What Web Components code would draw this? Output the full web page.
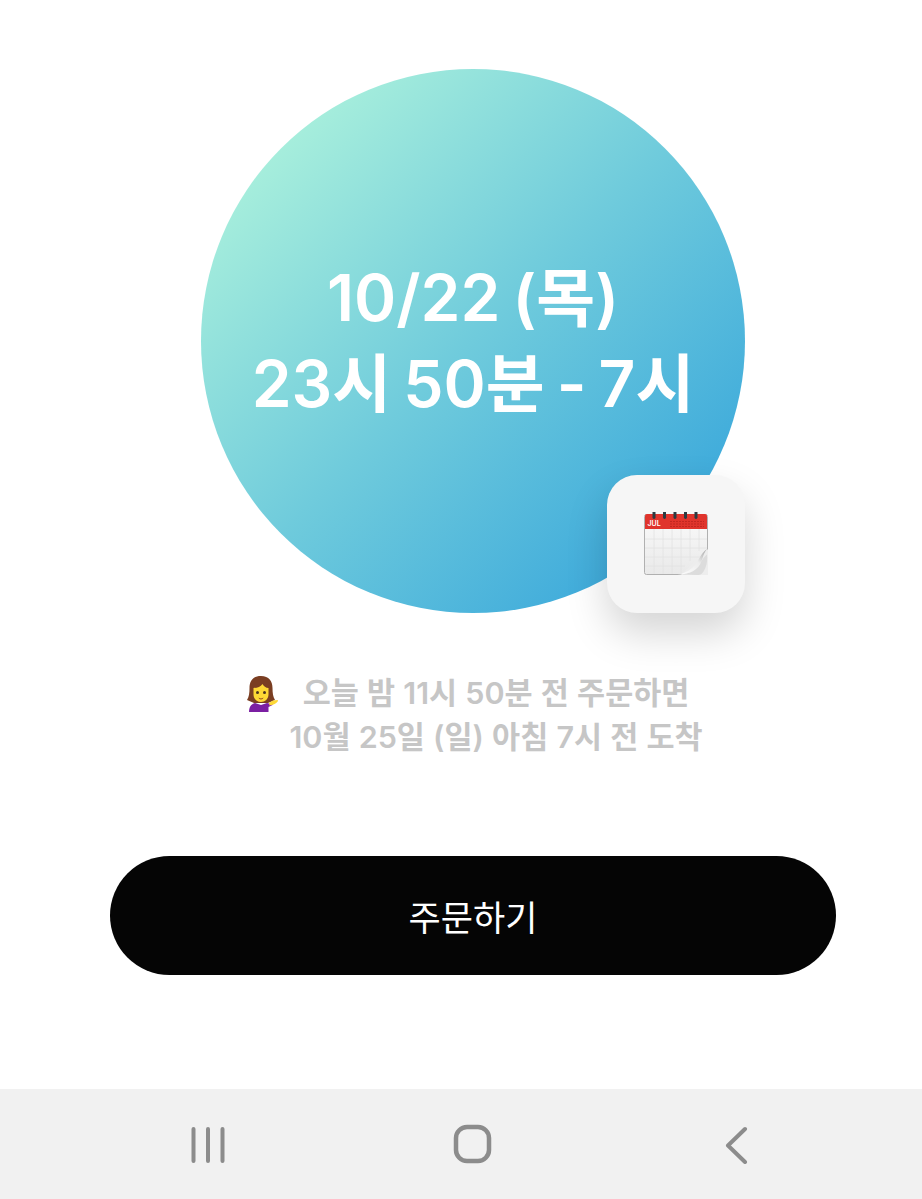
<!DOCTYPE html>
<html lang="ko">
<head>
<meta charset="utf-8">
<title>주문하기</title>
<style>
  html, body { margin: 0; padding: 0; background: #fff; }
  body { width: 922px; height: 1199px; overflow: hidden; font-family: "Inter", "Noto Sans CJK KR", sans-serif; }
</style>
</head>
<body>
<delivery-screen>
  <delivery-circle>
    <span>10/22 (목)</span>
    <span>23시 50분 - 7시</span>
  </delivery-circle>
  <delivery-note>
    <span>오늘 밤 11시 50분 전 주문하면</span>
    <span>10월 25일 (일) 아침 7시 전 도착</span>
  </delivery-note>
  <order-button>주문하기</order-button>
</delivery-screen>
<nav-bar></nav-bar>

<script>
class DeliveryScreen extends HTMLElement {
  constructor() {
    super();
    this.attachShadow({mode: "open"});
    this.shadowRoot.innerHTML = `
    <style>
      :host {
        display: flex;
        flex-direction: column;
        align-items: center;
        box-sizing: border-box;
        height: 1089px;
        padding: 69px 0 0 24px;
      }
    </style>
    <slot></slot>
    `;
  }
}

class DeliveryCircle extends HTMLElement {
  constructor() {
    super();
    this.attachShadow({mode: "open"});
    this.shadowRoot.innerHTML = `
    <style>
      :host {
        display: block;
        position: relative;
        width: 544px;
        height: 544px;
      }
      .disc {
        width: 100%;
        height: 100%;
        border-radius: 50%;
        background: linear-gradient(135deg, #b0f4dc 8%, #6fcbdc 50%, #36a5db 92%);
        display: flex;
        flex-direction: column;
        align-items: center;
        justify-content: center;
        color: #fff;
        font-size: 64px;
        line-height: 86px;
        font-weight: 600;
        word-spacing: -4px;
      }
      ::slotted(span) { display: block; white-space: nowrap; }
      .badge {
        position: absolute;
        right: 0;
        bottom: 0;
        width: 138px;
        height: 138px;
        border-radius: 30px;
        background: #f6f6f6;
        box-shadow: 0 20px 40px rgba(0, 0, 0, .17);
        display: flex;
        align-items: center;
        justify-content: center;
      }
    </style>
    <div class="disc"><slot></slot></div>
    <div class="badge">
      <svg width="64" height="64" viewBox="0 0 64 64">
        <defs>
          <linearGradient id="curl" x1="0" y1="1" x2="1" y2="0">
            <stop offset="0" stop-color="#fff"/>
            <stop offset=".6" stop-color="#ececec"/>
            <stop offset="1" stop-color="#a2a2a2"/>
          </linearGradient>
          <linearGradient id="page" x1="0" y1="0" x2="0" y2="1">
            <stop offset="0" stop-color="#fafafa"/>
            <stop offset="1" stop-color="#e9e9e9"/>
          </linearGradient>
        </defs>
        <rect x=".5" y="2.500" width="63" height="60" rx="2" fill="url(#page)" stroke="#b0b0b0"/>
        <path d="M1 17h62V4a2 2 0 0 0-2-2H3a2 2 0 0 0-2 2z" fill="#e0342c"/>
        <g fill="#2b3a40">
          <rect x="8.500" y="-1" width="3" height="8" rx="1.400"/>
          <rect x="19" y="-1" width="3" height="8" rx="1.400"/>
          <rect x="29.500" y="-1" width="3" height="8" rx="1.400"/>
          <rect x="40" y="-1" width="3" height="8" rx="1.400"/>
          <rect x="50.500" y="-1" width="3" height="8" rx="1.400"/>
        </g>
        <text x="3.500" y="13.500" font-size="7" font-weight="600" fill="#fff" font-family="Inter, sans-serif">JUL</text>
        <path d="M26 9.500h34M26 12h34M26 14.500h34" stroke="#b3231d" stroke-width=".7" stroke-dasharray="2 1"/>
        <path d="M1 27h62M1 36h62M1 45h58M1 54h40M10 17v45M19 17v45M28 17v45M37 17v45M46 17v32M55 17v22" stroke="#e2e2e2" stroke-width=".8" fill="none"/>
        <path d="M37 63L64 37v26z" fill="#ededed"/>
        <path d="M37 62.500c8-1 14-3 18-9 2-3 3-7 8-11 .5 5 0 9-1.500 13-1.500 4-4 7.500-7 7.500z" fill="#dcdcdc"/>
        <path d="M33 63c9-2 15-6 19-11 3-4 4-10 11-15-5 6-4 12-8 17-5 6-12 8-22 9z" fill="url(#curl)"/>
      </svg>
    </div>
    `;
  }
}

class DeliveryNote extends HTMLElement {
  constructor() {
    super();
    this.attachShadow({mode: "open"});
    this.shadowRoot.innerHTML = `
    <style>
      :host {
        display: flex;
        align-items: flex-start;
        gap: 11px;
        margin-top: 58px;
        padding-left: 3px;
        color: #c6c6c6;
        font-size: 30.5px;
        line-height: 44px;
        font-weight: 600;
        word-spacing: .5px;
      }
      svg { flex: none; margin-top: 5px; }
      .lines { display: flex; flex-direction: column; align-items: center; }
      ::slotted(span) { display: block; white-space: nowrap; }
    </style>
    <svg width="32" height="36" viewBox="0 0 32 36">
      <path d="M15 0C7 0 3.500 5 3.500 12c0 5-.5 9-2.500 12l7 3h14l7-3c-2-3-2.500-7-2.500-12C26.500 5 23 0 15 0z" fill="#7a3e22"/>
      <path d="M7.500 12c4 0 7-1 9-4 1 2 3.500 4 6 4v6.500c0 4.500-3.500 7.500-7.500 7.500s-7.500-3-7.500-7.500z" fill="#fdd835"/>
      <circle cx="11.500" cy="16.500" r="1.500" fill="#4a3320"/>
      <circle cx="18.500" cy="16.500" r="1.500" fill="#4a3320"/>
      <path d="M12.500 21.500c1.500 1.300 3.500 1.300 5 0-.5 2.500-4.500 2.500-5 0z" fill="#8a3b20"/>
      <path d="M3 36c0-5 2-8 6-9l6 2 6-2 2 .5 4-1.500-.5 3-4 2v5z" fill="#7b1fa2"/>
      <path d="M23 27l4-2.500 5-.5c0 2-2.500 3.500-4.500 4.500l-4 1z" fill="#fdd835"/>
    </svg>
    <div class="lines"><slot></slot></div>
    `;
  }
}

class OrderButton extends HTMLElement {
  constructor() {
    super();
    this.attachShadow({mode: "open"});
    this.shadowRoot.innerHTML = `
    <style>
      :host {
        display: flex;
        align-items: center;
        justify-content: center;
        width: 726px;
        height: 119px;
        margin-top: 97px;
        border-radius: 60px;
        background: #050505;
        color: #fff;
        font-size: 35px;
        font-weight: 400;
      }
    </style>
    <slot></slot>
    `;
  }
}

class NavBar extends HTMLElement {
  constructor() {
    super();
    this.attachShadow({mode: "open"});
    this.shadowRoot.innerHTML = `
    <style>
      :host {
        display: grid;
        grid-template-columns: repeat(3, 60px);
        justify-content: center;
        column-gap: 205px;
        align-items: center;
        height: 110px;
        padding-left: 24px;
        box-sizing: border-box;
        background: #f1f1f1;
      }
      svg { display: block; margin: auto; }
    </style>
    <svg width="40" height="40" viewBox="0 0 40 40" fill="none" stroke="#8c8c8c" stroke-width="4" stroke-linecap="round">
      <path d="M5.500 5v32M20 5v32M34.500 5v32"/>
    </svg>
    <svg width="40" height="40" viewBox="0 0 40 40" fill="none" stroke="#8c8c8c" stroke-width="4.500">
      <rect x="3" y="3" width="33" height="34" rx="11"/>
    </svg>
    <svg width="40" height="40" viewBox="0 0 40 40" fill="none" stroke="#8c8c8c" stroke-width="4" stroke-linecap="round" stroke-linejoin="round">
      <path d="M27 5L10 21.500 27 38"/>
    </svg>
    `;
  }
}

window.customElements.define("delivery-screen", DeliveryScreen);
window.customElements.define("delivery-circle", DeliveryCircle);
window.customElements.define("delivery-note", DeliveryNote);
window.customElements.define("order-button", OrderButton);
window.customElements.define("nav-bar", NavBar);
</script>
</body>
</html>
